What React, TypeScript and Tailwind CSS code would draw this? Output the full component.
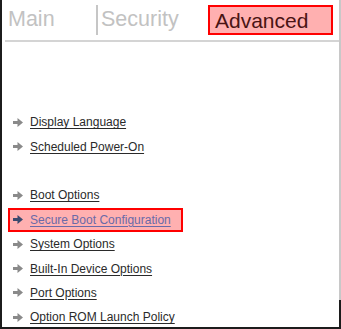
import React from 'react';

const Arrow: React.FC<{ active?: boolean }> = ({ active }) => (
  <svg width="10" height="9" viewBox="0 0 10 9" className="shrink-0">
    <polygon
      points="0,3 4.5,3 4.5,0 10,4.5 4.5,9 4.5,6 0,6"
      fill={active ? '#3a4a6e' : '#8a8a8a'}
    />
  </svg>
);

const groups: string[][] = [
  ['Display Language', 'Scheduled Power-On'],
  [
    'Boot Options',
    'Secure Boot Configuration',
    'System Options',
    'Built-In Device Options',
    'Port Options',
    'Option ROM Launch Policy',
  ],
];

export default function App() {
  return (
    <div
      className="relative w-[341px] h-[329px] bg-white border-l-2 border-b-2 border-[#1c1c1c] overflow-hidden"
      style={{ fontFamily: '"Liberation Sans", Arial, sans-serif' }}
    >
      {/* right edge */}
      <div className="absolute right-0 top-0 h-full w-[2px] bg-[#c8c8c8]" />
      <div className="absolute right-0 top-[300px] bottom-0 w-[2px] bg-[#1c1c1c]" />

      {/* tabs */}
      <div className="h-[42px] flex items-center border-b-2 border-[#d4d4d4] ml-[3px] mr-[2px]">
        <div className="w-[91px] pl-[3px] text-[21.5px] leading-none text-[#c2c2c2]">Main</div>
        <div className="w-[2px] h-[30px] bg-[#c6c6c6]" />
        <div className="w-[110px] pl-[3px] text-[21.5px] leading-none text-[#c2c2c2]">Security</div>
        <div className="w-[125px] h-[30px] flex items-center pl-[5px] bg-[#ffb0b0] border-2 border-[#ff0000] text-[21px] leading-none text-[#4a1414]">
          Advanced
        </div>
      </div>

      {/* items */}
      <div className="pt-[68px] text-[12px] leading-none">
        {groups.map((group, gi) => (
          <div key={gi} className={gi > 0 ? 'mt-[24.4px]' : ''}>
            {group.map((label) => {
              const active = label === 'Secure Boot Configuration';
              return (
                <div key={label} className="h-[24.4px] flex items-center">
                  <div
                    className={`ml-[6px] w-[175px] h-[24px] flex items-center gap-[7px] ${
                      active ? 'bg-[#ffb0b0] border-2 border-[#ff0000] pl-[3px]' : 'pl-[5px]'
                    }`}
                  >
                    <Arrow active={active} />
                    <span
                      className={`underline underline-offset-2 whitespace-nowrap ${
                        active ? 'text-[#6a6aa8]' : 'text-[#2a2a2a]'
                      }`}
                    >
                      {label}
                    </span>
                  </div>
                </div>
              );
            })}
          </div>
        ))}
      </div>
    </div>
  );
}
